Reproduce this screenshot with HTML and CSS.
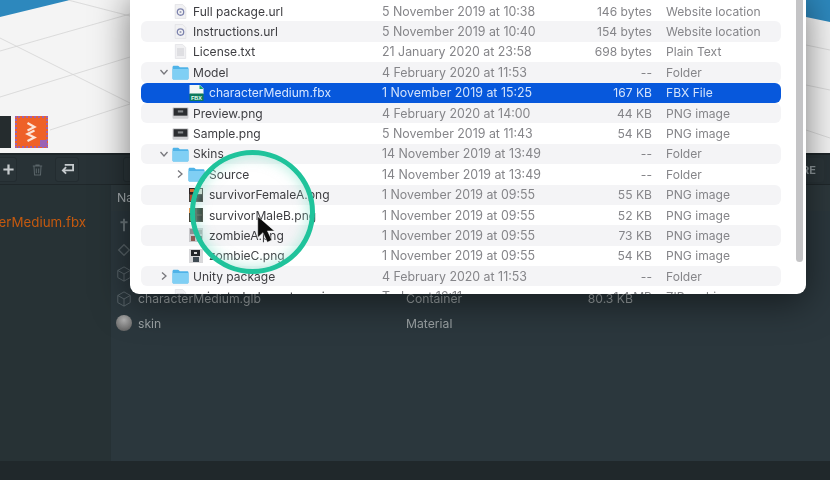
FILE: index.html
```html
<!DOCTYPE html>
<html lang="en">
<head>
<meta charset="utf-8">
<title>Finder over model importer</title>
<link rel="stylesheet" href="styles.css">
</head>
<body>
<svg class="defs" width="0" height="0">
  <defs>
    <symbol id="folder" viewBox="0 0 17 16">
      <path d="M.5 3.200c0-.9.6-1.500 1.500-1.500h3.800c.6 0 .9.2 1.300.7l.7.8h7.200c.9 0 1.500.5 1.500 1.300v9.800c0 .8-.5 1.200-1.300 1.200H1.800c-.8 0-1.300-.4-1.300-1.200z" fill="#4fb3e8"/>
      <path d="M.5 5h16v9.300c0 .8-.5 1.200-1.300 1.200H1.800c-.8 0-1.300-.4-1.300-1.200z" fill="#80cff4"/>
    </symbol>
    <symbol id="url" viewBox="0 0 12 14">
      <path d="M1 .5h7l3 3v10H1z" fill="#f1f1f3" stroke="#dcdce0" stroke-width=".6"/>
      <circle cx="6" cy="7.500" r="3" fill="none" stroke="#7d83ad" stroke-width="1.200"/>
      <circle cx="6" cy="7.500" r="1" fill="#9a9db8"/>
    </symbol>
    <symbol id="txt" viewBox="0 0 12 15">
      <path d="M.8.5h7.400l3 3v11H.8z" fill="#f0f0f2" stroke="#dcdce0" stroke-width=".6"/>
      <path d="M2.500 5h7M2.500 7h7M2.500 9h7M2.500 11h7" stroke="#c4c4ca" stroke-width=".8"/>
    </symbol>
    <symbol id="fbx" viewBox="0 0 16 16">
      <path d="M1 0h10.500l3.500 3.500V9H1z" fill="#f3f7f5"/>
      <path d="M11 0l4 4h-4z" fill="#0fa86f"/>
      <rect x="1" y="8.500" width="14" height="7.500" fill="#0d7a5b"/>
      <text x="8" y="14.600" class="fbx-label">FBX</text>
    </symbol>
    <symbol id="preview" viewBox="0 0 16 12">
      <rect x=".5" y=".5" width="15" height="11" rx="1" fill="#cfcfd2"/>
      <rect x="1.500" y="1.500" width="13" height="7" fill="#2c2e31"/>
      <rect x="5.500" y="3.500" width="5" height="2" fill="#85888b"/>
    </symbol>
    <symbol id="thumbA" viewBox="0 0 14 14">
      <rect width="14" height="14" fill="#45403c"/>
      <rect x="0" y="0" width="6" height="6" fill="#2d2322"/>
      <rect x="1" y="1" width="4" height="3" fill="#d9692f"/>
      <rect x="8" y="1" width="5" height="5" fill="#dcd8d0"/>
      <rect x="1" y="7" width="5" height="6" fill="#b8472a"/>
      <rect x="8" y="7" width="5" height="6" fill="#2b2b2b"/>
    </symbol>
    <symbol id="thumbB" viewBox="0 0 14 14">
      <rect width="14" height="14" fill="#46463c"/>
      <rect x="0" y="0" width="6" height="5" fill="#e09a55"/>
      <rect x="8" y="0" width="5" height="6" fill="#2f3a30"/>
      <rect x="1" y="7" width="5" height="6" fill="#7c9a4e"/>
      <rect x="8" y="8" width="5" height="5" fill="#2f2f2c"/>
    </symbol>
    <symbol id="thumbC" viewBox="0 0 14 14">
      <rect width="14" height="14" fill="#c8c8cb"/>
      <rect x="1" y="1" width="5" height="5" fill="#8d9094"/>
      <rect x="8" y="2" width="5" height="4" fill="#a8a8aa"/>
      <rect x="2" y="8" width="4" height="5" fill="#8d5a52"/>
      <rect x="8" y="8" width="5" height="5" fill="#6c6f73"/>
    </symbol>
    <symbol id="thumbD" viewBox="0 0 14 14">
      <rect width="14" height="14" fill="#d8d8da"/>
      <rect x="2" y="1" width="9" height="6" fill="#24272a"/>
      <rect x="4" y="8" width="6" height="5" fill="#3e4a52"/>
      <rect x="5" y="3" width="3" height="2" fill="#d8d8d8"/>
    </symbol>
    <symbol id="chev-down" viewBox="0 0 10 10"><path d="M1.500 3l3.500 4 3.500-4" fill="none" stroke="#77777c" stroke-width="1.300"/></symbol>
    <symbol id="chev-right" viewBox="0 0 10 10"><path d="M3 1.500l4 3.500-4 3.500" fill="none" stroke="#77777c" stroke-width="1.300"/></symbol>
    <symbol id="cube" viewBox="0 0 18 18"><path d="M9 1l7 4v8l-7 4-7-4V5zM2 5l7 4 7-4M9 9v8" fill="none" stroke="#5d686d" stroke-width="1"/></symbol>
  </defs>
</svg>

<div class="app">
  <div class="viewport">
    <svg class="scene" viewBox="0 0 830 153" preserveAspectRatio="none">
      <polygon points="0,17 70,0 0,0" fill="#2d88bd"/>
      <polygon points="806,0 830,0 830,22 806,17" fill="#2d88bd"/>
      <g stroke="#d4d4d4" stroke-width=".8" fill="none">
        <path d="M0 51L130 14"/>
        <path d="M0 97L130 57"/>
        <path d="M50 130L130 104"/>
        <path d="M0 38L130 103"/>
        <path d="M68 0L130 16"/>
        <path d="M806 45L830 50"/>
        <path d="M806 85L830 90"/>
        <path d="M806 130L830 138"/>
      </g>
    </svg>
    <div class="tile tile-dark"></div>
    <div class="tile tile-logo">
      <svg viewBox="0 0 28 28" class="logo" aria-hidden="true">
        <path d="M10 5l7 4-7 3.500M17 12.500l-7 3.500 7 3.500-7 3.500" fill="none" stroke="#fbe4d8" stroke-width="2.200"/>
      </svg>
      <span class="tile-corner"></span>
    </div>
  </div>

  <div class="toolbar">
    <div class="tool tool-add">
      <svg viewBox="0 0 14 14" width="13" height="13"><path d="M7 1.500v11M1.500 7h11" stroke="#c6cbce" stroke-width="2.400"/></svg>
    </div>
    <div class="tool tool-trash">
      <svg viewBox="0 0 14 16" width="11" height="14"><path d="M1 3h12M5 3V1.500h4V3M2.500 3l.7 11.500h7.600L11.500 3M5.500 6v6M8.500 6v6" fill="none" stroke="#5a6569" stroke-width="1.300"/></svg>
    </div>
    <div class="tool tool-return">
      <svg viewBox="0 0 16 14" width="15" height="13"><path d="M5 2h9v6H3M6.500 4.500L3 8l3.500 3.500" fill="none" stroke="#c6cbce" stroke-width="2"/></svg>
    </div>
    <div class="tool tool-grid"></div>
    <div class="tool-text">RE</div>
  </div>

  <div class="main">
    <aside class="sidebar"><span class="side-file">characterMedium.fbx</span></aside>
    <section class="assets">
      <div class="asset-head">Name</div>
      <div class="asset-row"><svg class="asset-icon" viewBox="0 0 18 18"><path d="M9 2v14M5 6h8" stroke="#6a7579" stroke-width="2.200"/></svg></div>
      <div class="asset-row"><svg class="asset-icon" viewBox="0 0 18 18"><path d="M9 3l6 6-6 6-6-6z" fill="none" stroke="#566166" stroke-width="1.500"/></svg></div>
      <div class="asset-row"><svg class="asset-icon"><use href="#cube"/></svg></div>
      <div class="asset-row">
        <svg class="asset-icon"><use href="#cube"/></svg>
        <span class="asset-name">characterMedium.glb</span>
        <span class="asset-kind">Container</span>
        <span class="asset-size">80.3 KB</span>
      </div>
      <div class="asset-row">
        <span class="sphere"></span>
        <span class="asset-name">skin</span>
        <span class="asset-kind">Material</span>
      </div>
    </section>
  </div>

  <div class="statusbar"></div>
</div>

<div class="finder">
  <div class="finder-list">
    <div class="row"><div class="name lvl1"><svg class="ic ic-file"><use href="#url"/></svg>Full package.url</div><div class="date">5 November 2019 at 10:38</div><div class="size">146 bytes</div><div class="kind">Website location</div></div>
    <div class="row alt"><div class="name lvl1"><svg class="ic ic-file"><use href="#url"/></svg>Instructions.url</div><div class="date">5 November 2019 at 10:40</div><div class="size">154 bytes</div><div class="kind">Website location</div></div>
    <div class="row"><div class="name lvl1"><svg class="ic ic-file"><use href="#txt"/></svg>License.txt</div><div class="date">21 January 2020 at 23:58</div><div class="size">698 bytes</div><div class="kind">Plain Text</div></div>
    <div class="row alt"><div class="name lvl1"><svg class="chev"><use href="#chev-down"/></svg><svg class="ic"><use href="#folder"/></svg>Model</div><div class="date">4 February 2020 at 11:53</div><div class="size">--</div><div class="kind">Folder</div></div>
    <div class="row selected"><div class="name lvl2"><svg class="ic"><use href="#fbx"/></svg>characterMedium.fbx</div><div class="date">1 November 2019 at 15:25</div><div class="size">167 KB</div><div class="kind">FBX File</div></div>
    <div class="row alt"><div class="name lvl1"><svg class="ic"><use href="#preview"/></svg>Preview.png</div><div class="date">4 February 2020 at 14:00</div><div class="size">44 KB</div><div class="kind">PNG image</div></div>
    <div class="row"><div class="name lvl1"><svg class="ic"><use href="#preview"/></svg>Sample.png</div><div class="date">5 November 2019 at 11:43</div><div class="size">54 KB</div><div class="kind">PNG image</div></div>
    <div class="row alt"><div class="name lvl1"><svg class="chev"><use href="#chev-down"/></svg><svg class="ic"><use href="#folder"/></svg>Skins</div><div class="date">14 November 2019 at 13:49</div><div class="size">--</div><div class="kind">Folder</div></div>
    <div class="row"><div class="name lvl2"><svg class="chev"><use href="#chev-right"/></svg><svg class="ic"><use href="#folder"/></svg>Source</div><div class="date">14 November 2019 at 13:49</div><div class="size">--</div><div class="kind">Folder</div></div>
    <div class="row alt"><div class="name lvl2"><svg class="ic ic-thumb"><use href="#thumbA"/></svg>survivorFemaleA.png</div><div class="date">1 November 2019 at 09:55</div><div class="size">55 KB</div><div class="kind">PNG image</div></div>
    <div class="row"><div class="name lvl2"><svg class="ic ic-thumb"><use href="#thumbB"/></svg>survivorMaleB.png</div><div class="date">1 November 2019 at 09:55</div><div class="size">52 KB</div><div class="kind">PNG image</div></div>
    <div class="row alt"><div class="name lvl2"><svg class="ic ic-thumb"><use href="#thumbC"/></svg>zombieA.png</div><div class="date">1 November 2019 at 09:55</div><div class="size">73 KB</div><div class="kind">PNG image</div></div>
    <div class="row"><div class="name lvl2"><svg class="ic ic-thumb"><use href="#thumbD"/></svg>zombieC.png</div><div class="date">1 November 2019 at 09:55</div><div class="size">54 KB</div><div class="kind">PNG image</div></div>
    <div class="row alt"><div class="name lvl1"><svg class="chev"><use href="#chev-right"/></svg><svg class="ic"><use href="#folder"/></svg>Unity package</div><div class="date">4 February 2020 at 11:53</div><div class="size">--</div><div class="kind">Folder</div></div>
    <div class="row"><div class="name lvl1"><svg class="ic ic-file"><use href="#txt"/></svg>animated-characters.zip</div><div class="date">Today at 16:11</div><div class="size">1.4 MB</div><div class="kind">ZIP archive</div></div>
  </div>
  <div class="scrollbar"></div>
</div>

<div class="ring"></div>
<svg class="cursor" viewBox="0 0 24 34" aria-hidden="true">
  <path d="M2 1.500v24l6-5.500 5 11 5-2.500-5-10.500h8z" fill="#0c0c0c" stroke="#fff" stroke-opacity=".6" stroke-width=".8"/>
</svg>
</body>
</html>
```

FILE: styles.css
```css
* { box-sizing: border-box; }

html, body {
  margin: 0;
  width: 830px;
  height: 480px;
  overflow: hidden;
  background: #2b363c;
  font-family: Inter, "Liberation Sans", sans-serif;
}

.defs { position: absolute; }

.fbx-label {
  font: 700 5.500px "Liberation Sans", sans-serif;
  fill: #eafff5;
  text-anchor: middle;
}

.app {
  display: flex;
  flex-direction: column;
  width: 830px;
  height: 480px;
  filter: blur(.3px);
}

/* 3D viewport */
.viewport {
  position: relative;
  flex: 0 0 153px;
  background: #f4f4f4;
  overflow: hidden;
}

.scene {
  display: block;
  width: 100%;
  height: 100%;
}

.tile { position: absolute; top: 116px; height: 32px; }

.tile-dark {
  left: -10px;
  width: 21px;
  background: #252c2e;
}

.tile-logo {
  left: 15px;
  width: 33px;
  background: #ee6128;
  border: 2px dotted #9a62b4;
}

.logo { display: block; width: 100%; height: 100%; }

.tile-corner {
  position: absolute;
  right: -1px;
  bottom: -1px;
  width: 7px;
  height: 7px;
  background: #9a62b4;
}

/* toolbar */
.toolbar {
  flex: 0 0 32px;
  display: flex;
  align-items: center;
  background: #283236;
  border-top: 2px solid #1d2528;
  border-bottom: 1px solid #1f272a;
}

.tool {
  display: flex;
  align-items: center;
  justify-content: center;
  height: 25px;
  border: 1px solid #232c30;
  border-radius: 3px;
  background: #2a3438;
}

.tool-add { width: 21px; margin-left: -4px; padding-left: 3px; }
.tool-trash { width: 18px; margin-left: 11px; border-color: transparent; background: none; }
.tool-return { width: 24px; margin-left: 9px; }
.tool-grid { width: 20px; margin-left: 44px; }

.tool-text {
  margin-left: auto;
  margin-right: 6px;
  padding: 5px 8px 5px 6px;
  border-radius: 3px;
  background: #2b3539;
  font-size: 11px;
  font-weight: 700;
  color: #8e979b;
}

/* panels */
.main {
  flex: 1;
  display: flex;
  min-height: 0;
}

.sidebar {
  flex: 0 0 110px;
  display: flex;
  justify-content: flex-end;
  padding: 30px 24px 0 0;
  overflow: hidden;
  background: #273235;
}

.side-file {
  flex: none;
  height: 15px;
  font-size: 13.300px;
  line-height: 15px;
  white-space: nowrap;
  color: #c4590f;
}

.assets {
  flex: 1;
  background: #2b373d;
  border-left: 1px solid #263135;
}

.asset-head {
  height: 26px;
  padding: 5px 0 0 6px;
  font-size: 12.300px;
  line-height: 15px;
  color: #a5acaf;
  background: #2d383c;
}

.asset-row {
  position: relative;
  top: 2px;
  display: flex;
  align-items: center;
  height: 24.500px;
  padding-left: 5px;
  font-size: 12.200px;
  color: #9aa1a3;
}

.asset-icon { flex: none; width: 16px; height: 16px; }

.sphere {
  flex: none;
  width: 16px;
  height: 16px;
  border-radius: 50%;
  background: radial-gradient(circle at 50% 30%, #b0b0b0, #5d5d5d 90%);
}

.asset-name { margin-left: 6px; width: 268px; }
.asset-kind { width: 154px; }
.asset-size { width: 73px; text-align: right; }

.statusbar {
  flex: 0 0 19px;
  background: #20282b;
}

/* Finder window */
.finder {
  position: absolute;
  left: 130px;
  top: -10px;
  width: 676px;
  height: 304px;
  overflow: hidden;
  background: #fff;
  border-radius: 9px;
  box-shadow: 0 8px 36px rgba(0, 0, 0, .5);
  font-size: 12.100px;
  color: #858589;
  filter: blur(.3px);
}

.finder-list {
  padding: 11px 25px 0 11px;
}

.row {
  display: grid;
  grid-template-columns: 241px 160px 110px 1fr;
  align-items: center;
  height: 20.400px;
  border-radius: 6px;
  white-space: nowrap;
}

.row.alt { background: #f4f4f6; }

.row.selected {
  background: #0758dc;
  color: #d4e3fb;
}

.row.selected .name { color: #d6e6ff; }

.name {
  position: relative;
  display: flex;
  align-items: center;
  color: #3e3e42;
  font-size: 12.050px;
}

.date { font-size: 12.400px; }
.lvl1 { padding-left: 52px; }
.lvl2 { padding-left: 68px; }

.size {
  width: 110px;
  margin-right: -1px;
  text-align: right;
}

.kind { padding-left: 14px; }

.ic {
  position: absolute;
  width: 17px;
  height: 16px;
  left: 31px;
}

.lvl2 .ic { left: 47px; }
.ic-file { left: 33px; width: 13px; height: 15px; }
.lvl2 .ic-thumb { left: 48px; width: 14px; height: 14px; }

.chev {
  position: absolute;
  width: 10px;
  height: 10px;
  left: 18px;
}

.lvl2 .chev { left: 34px; }

.scrollbar {
  position: absolute;
  top: 0;
  right: 3px;
  width: 7px;
  height: 272px;
  border-radius: 4px;
  background: #c4c4c6;
}

/* pointer highlight */
.ring {
  position: absolute;
  left: 190px;
  top: 150px;
  width: 125px;
  height: 124px;
  border-radius: 50%;
  border: 5px solid #1fc39b;
  box-shadow: inset 0 0 12px 3px rgba(150, 230, 210, .55);
  filter: blur(.6px);
}

.cursor {
  position: absolute;
  left: 256px;
  top: 214px;
  width: 21px;
  height: 32px;
}
```
